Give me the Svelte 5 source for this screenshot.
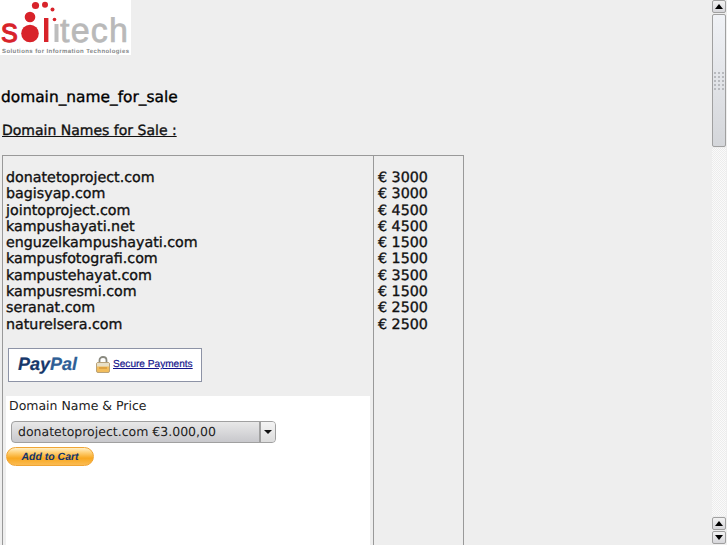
<script>
  const domains = [
    ['donatetoproject.com', 3000],
    ['bagisyap.com', 3000],
    ['jointoproject.com', 4500],
    ['kampushayati.net', 4500],
    ['enguzelkampushayati.com', 1500],
    ['kampusfotografi.com', 1500],
    ['kampustehayat.com', 3500],
    ['kampusresmi.com', 1500],
    ['seranat.com', 2500],
    ['naturelsera.com', 2500]
  ];
  const dots = Array.from({ length: 15 }, (_, i) => i);
</script>

<div class="window">
  <main class="page">
    <svg class="logo" width="131" height="55" viewBox="0 0 131 55">
      <rect width="131" height="55" fill="#fff" />
      <circle cx="35.5" cy="5.5" r="3.6" fill="#d8232a" />
      <circle cx="45" cy="4.8" r="3" fill="#d8232a" />
      <circle cx="52.5" cy="9.5" r="2" fill="#d8232a" />
      <circle cx="30" cy="17" r="5.3" fill="#d8232a" />
      <circle cx="54.5" cy="19.5" r="1.8" fill="#d8232a" />
      <circle cx="30" cy="33.5" r="8.8" fill="#d8232a" />
      <text x="1" y="42" class="logo-s">s</text>
      <rect x="44" y="18" width="4.4" height="24" fill="#d8232a" />
      <rect x="54.5" y="24" width="4" height="18" fill="#bdbdbd" />
      <text x="60" y="42" textLength="68" class="logo-rest">tech</text>
      <text x="2" y="52.5" textLength="127" class="logo-tag">Solutions for Information Technologies</text>
    </svg>

    <h1>domain_name_for_sale</h1>
    <h2>Domain Names for Sale :</h2>

    <div class="table">
      <div class="names">
        <div class="list">
          {#each domains as d}
            <div>{d[0]}</div>
          {/each}
        </div>

        <div class="paypal">
          <span class="pp-word"><span class="pay">Pay</span><span class="pal">Pal</span></span>
          <svg class="lock" width="14" height="17" viewBox="0 0 14 17">
            <path d="M3.5 7V4.2C3.5 2.4 5 1 7 1s3.5 1.4 3.5 3.2V7" fill="none" stroke="#8a8a80" stroke-width="1.8" />
            <rect x="0.5" y="6.5" width="13" height="10" rx="1.5" fill="#f2bd5c" stroke="#b8a27a" />
            <rect x="1" y="7" width="12" height="3.5" fill="#e8e0c8" />
            <rect x="3" y="11.5" width="8" height="1" fill="#c98a2c" />
          </svg>
          <span class="secure">Secure Payments</span>
        </div>

        <div class="form">
          <div class="label">Domain Name &amp; Price</div>
          <div class="select">
            <span class="value">donatetoproject.com €3.000,00</span>
            <span class="drop"><i></i></span>
          </div>
          <div class="cart">Add to Cart</div>
        </div>
      </div>

      <div class="prices">
        {#each domains as d}
          <div>€ {d[1]}</div>
        {/each}
      </div>
    </div>
  </main>

  <aside class="scrollbar">
    <div class="arrow"><i class="up"></i></div>
    <div class="thumb">
      <div class="grip">
        {#each dots as n}<b></b>{/each}
      </div>
    </div>
    <div class="track"></div>
    <div class="arrow"><i class="up"></i></div>
    <div class="arrow"><i class="down"></i></div>
  </aside>
</div>

<style>
  :global(body) {
    margin: 0;
    background: #eeeeee;
  }

  .window {
    display: flex;
    height: 545px;
    width: 727px;
    overflow: hidden;
    background: #eeeeee;
    font-family: "DejaVu Sans", sans-serif;
    text-rendering: geometricPrecision;
    color: #111;
  }

  .page {
    flex: 1;
    min-width: 0;
    overflow: hidden;
  }

  .logo {
    display: block;
  }
  .logo-s {
    font: 34px "Liberation Sans", sans-serif;
    fill: #d8232a;
    stroke: #d8232a;
    stroke-width: 0.8px;
  }
  .logo-rest {
    font: 34px "Liberation Sans", sans-serif;
    fill: #b9b9b9;
    stroke: #b9b9b9;
    stroke-width: 0.7px;
  }
  .logo-tag {
    font: bold 6px "Liberation Sans", sans-serif;
    fill: #858888;
  }

  h1 {
    margin: 33px 0 0 1px;
    font-size: 15.4px;
    line-height: 18px;
    font-weight: 500;
    color: #000;
    -webkit-text-stroke: 0.35px #000;
  }

  h2 {
    margin: 16px 0 0 2px;
    font-size: 14px;
    line-height: 18px;
    font-weight: 500;
    text-decoration: underline;
    -webkit-text-stroke: 0.35px #111;
  }

  .table {
    display: flex;
    width: 460px;
    height: 400px;
    margin: 15px 0 0 2px;
    border: 1px solid #999;
    border-bottom: none;
  }

  .names {
    width: 371px;
    border-right: 1px solid #999;
    box-sizing: border-box;
    padding: 14px 3px 0 3px;
    flex: none;
  }

  .list,
  .prices {
    font-size: 14.25px;
    line-height: 16.3px;
    -webkit-text-stroke: 0.35px #111;
  }

  .prices {
    padding: 14px 0 0 4px;
  }

  .paypal {
    display: flex;
    align-items: center;
    box-sizing: border-box;
    width: 194px;
    height: 34px;
    margin: 15px 0 0 2px;
    padding-left: 9px;
    background: #fff;
    border: 1px solid #8d93a6;
  }
  .pp-word {
    font: italic bold 18px "Liberation Sans", sans-serif;
    width: 78px;
    -webkit-text-stroke: 0.2px currentColor;
  }
  .pay {
    color: #17386b;
  }
  .pal {
    color: #2f5f96;
  }
  .lock {
    margin-right: 3px;
  }
  .secure {
    font: 10.1px "Liberation Sans", sans-serif;
    color: #14148c;
    text-decoration: underline;
    -webkit-text-stroke: 0.2px #14148c;
  }

  .form {
    background: #fff;
    height: 160px;
    margin-top: 14px;
    padding: 2px 0 0 3px;
  }
  .label {
    font-size: 12.5px;
    line-height: 16px;
    color: #222;
  }
  .select {
    display: flex;
    box-sizing: border-box;
    width: 265px;
    height: 22px;
    margin: 7px 0 0 2px;
    border: 1px solid #a0a0a0;
    border-radius: 4px;
    background: linear-gradient(#e8e8e8, #c8c8cc);
    font-size: 12.5px;
    line-height: 20px;
    color: #222;
  }
  .value {
    flex: 1;
    padding-left: 6px;
  }
  .drop {
    display: flex;
    align-items: center;
    justify-content: center;
    width: 14px;
    border-left: 2px solid #a0a0a0;
    background: linear-gradient(#f4f4f4, #dcdcdc);
    border-radius: 0 3px 3px 0;
  }
  .drop i {
    border-top: 4px solid #111;
    border-left: 4px solid transparent;
    border-right: 4px solid transparent;
  }
  .cart {
    box-sizing: border-box;
    width: 88px;
    height: 19px;
    margin: 4px 0 0 -3px;
    border: 1px solid #f0a535;
    border-radius: 10px;
    background: linear-gradient(#fff0c8 0%, #ffd27a 25%, #f8a820 60%, #fbbb52 100%);
    font: italic bold 10.5px/18px "Liberation Sans", sans-serif;
    color: #12336a;
    text-align: center;
  }

  .scrollbar {
    display: flex;
    flex-direction: column;
    gap: 1px;
    box-sizing: border-box;
    width: 14px;
    margin-right: 1px;
    padding-bottom: 1px;
    flex: none;
  }
  .arrow {
    box-sizing: border-box;
    height: 13px;
    flex: none;
    display: flex;
    align-items: center;
    justify-content: center;
    background: linear-gradient(#f2f2f2, #d6d6da);
    border: 1px solid #a0a0a0;
    border-radius: 2px;
  }
  .up {
    border-bottom: 5px solid #000;
    border-left: 4px solid transparent;
    border-right: 4px solid transparent;
  }
  .down {
    border-top: 5px solid #000;
    border-left: 4px solid transparent;
    border-right: 4px solid transparent;
  }
  .thumb {
    box-sizing: border-box;
    height: 133px;
    flex: none;
    border: 1px solid #a0a0a0;
    border-radius: 2px;
    background: linear-gradient(#f0f2f6, #d4d6da);
    display: flex;
    align-items: center;
    justify-content: center;
  }
  .grip {
    display: grid;
    grid-template-columns: repeat(3, 2px);
    gap: 2px;
  }
  .grip b {
    width: 2px;
    height: 2px;
    background: #b8babe;
  }
  .track {
    flex: 1;
    background: repeating-conic-gradient(#fafafa 0 25%, #ececec 0 50%) 0 0 / 2px 2px;
  }
</style>
